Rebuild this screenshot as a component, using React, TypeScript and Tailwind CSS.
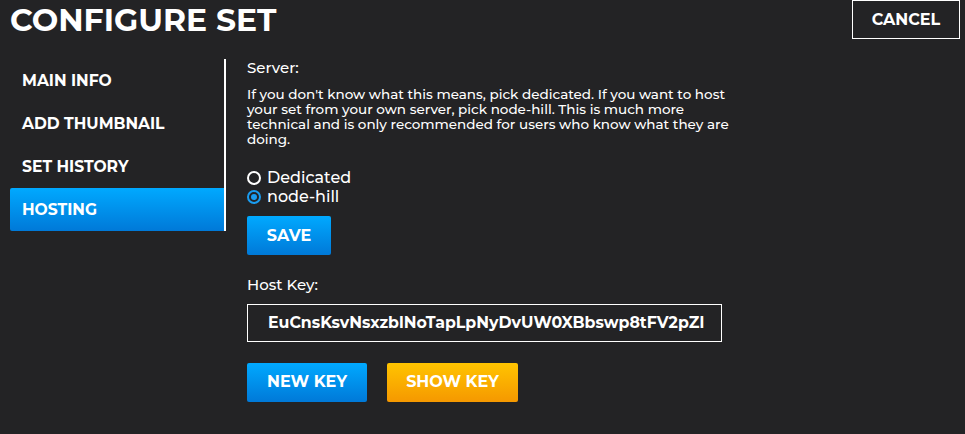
import React, { useState } from "react";

const font = { fontFamily: "Montserrat, Inter, 'Noto Sans', sans-serif" };

function NavItem({ label, active }: { label: string; active?: boolean }) {
    return (
        <div
            className={
                "h-[43px] flex items-center pl-3 text-[15.6px] font-bold text-white " +
                (active ? "bg-gradient-to-b from-[#00a9ff] to-[#0079d8] rounded-l-[2px]" : "")
            }
        >
            {label}
        </div>
    );
}

function Radio({ label, checked, onClick }: { label: string; checked?: boolean; onClick: () => void }) {
    return (
        <label className="flex items-center gap-[6px] cursor-pointer h-[19px]" onClick={onClick}>
            <span
                className={
                    "w-[14px] h-[14px] rounded-full border-2 flex items-center justify-center bg-transparent " +
                    (checked ? "border-[#1a9cf0]" : "border-white")
                }
            >
                {checked && <span className="w-[6px] h-[6px] rounded-full bg-[#1a9cf0]" />}
            </span>
            <span className="text-[16px] font-medium text-white">{label}</span>
        </label>
    );
}

export default function App() {
    const [server, setServer] = useState("node-hill");

    return (
        <div className="w-[965px] h-[434px] bg-[#232325] text-white overflow-hidden" style={font}>
            <div className="flex justify-between items-start">
                <h1 className="ml-[10px] mt-[2px] text-[31.4px] leading-[37px] font-bold">CONFIGURE SET</h1>
                <button className="mr-[5px] w-[108px] h-[39px] border border-white text-[16px] font-bold">CANCEL</button>
            </div>

            <div className="flex mt-[20px]">
                <div className="w-[216px] ml-[10px] border-r-2 border-white h-[172px] flex flex-col">
                    <NavItem label="MAIN INFO" />
                    <NavItem label="ADD THUMBNAIL" />
                    <NavItem label="SET HISTORY" />
                    <NavItem label="HOSTING" active />
                </div>

                <div className="ml-[21px] w-[485px]">
                    <div className="text-[15px] font-medium leading-[18px]">Server:</div>
                    <p className="mt-[10px] w-[484px] text-[13.5px] font-medium leading-[15px] text-white">
                        If you don't know what this means, pick dedicated. If you want to host your set from your own server, pick node-hill. This is much more technical and is only recommended for users who know what they are doing.
                    </p>
                    <div className="mt-[21px] flex flex-col">
                        <Radio label="Dedicated" checked={server === "dedicated"} onClick={() => setServer("dedicated")} />
                        <Radio label="node-hill" checked={server === "node-hill"} onClick={() => setServer("node-hill")} />
                    </div>
                    <button className="mt-[10px] w-[84px] h-[39px] rounded-[2px] bg-gradient-to-b from-[#00a9ff] to-[#0079d8] text-[16px] font-bold">
                        SAVE
                    </button>

                    <div className="mt-[19px] text-[15px] font-medium">Host Key:</div>
                    <div className="mt-[7px] w-[475px] h-[38px] border border-white flex items-center px-[20px] text-[15.8px] font-bold whitespace-nowrap overflow-hidden">
                        EuCnsKsvNsxzblNoTapLpNyDvUW0XBbswp8tFV2pZl
                    </div>

                    <div className="mt-[21px] flex gap-[20px]">
                        <button className="w-[120px] h-[39px] rounded-[2px] bg-gradient-to-b from-[#00a9ff] to-[#0079d8] text-[16px] font-bold">
                            NEW KEY
                        </button>
                        <button className="w-[131px] h-[39px] rounded-[2px] bg-gradient-to-b from-[#ffc400] to-[#f59800] text-[16px] font-bold">
                            SHOW KEY
                        </button>
                    </div>
                </div>
            </div>
        </div>
    );
}
